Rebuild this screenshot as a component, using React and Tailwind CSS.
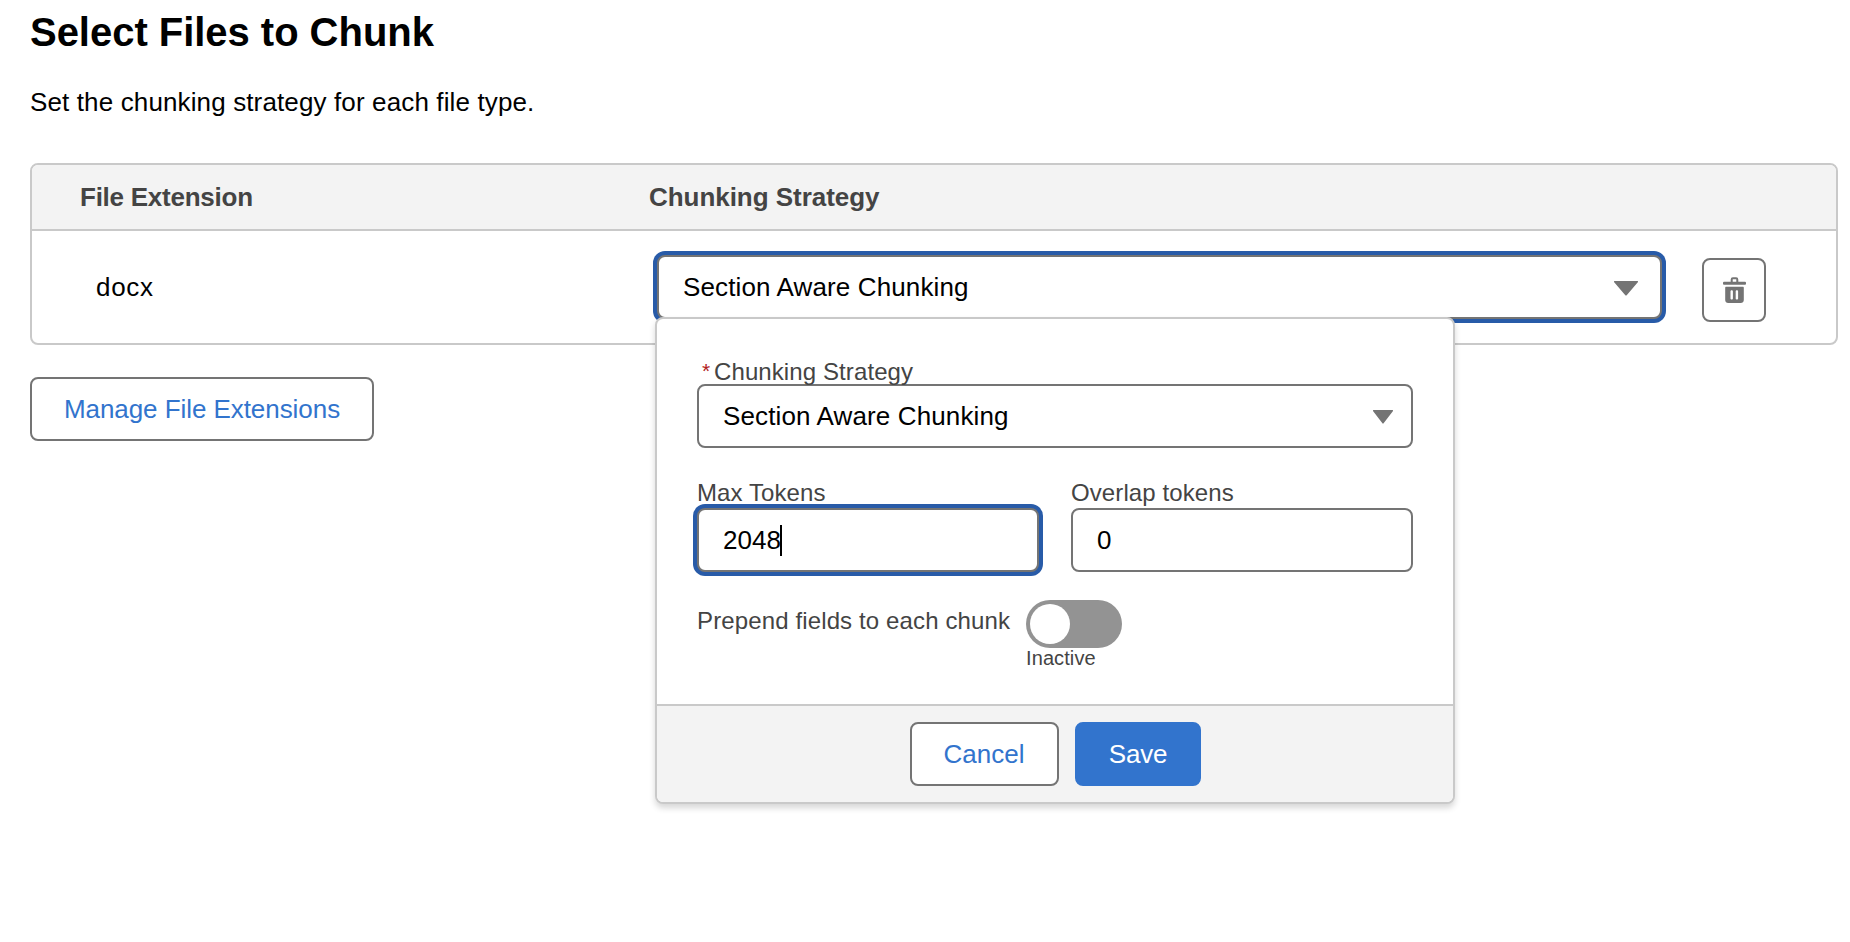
import clsx from 'clsx'

function DownTriangle({ className }) {
  return (
    <svg viewBox="0 0 24 16" preserveAspectRatio="none" className={clsx('shrink-0 fill-[#747474]', className)}>
      <path d="M.8 0h22.4c.8 0 1.100.7.6 1.300L12.700 15.200c-.4.5-1 .5-1.400 0L.2 1.300C-.3.7 0 0 .8 0z" />
    </svg>
  )
}

function TrashIcon() {
  return (
    <svg viewBox="0 0 23 26" className="w-[23px] h-[26px] fill-[#747474]">
      <path
        d="M8.700 5.500V2.400c0-.7.5-1.200 1.200-1.200h3.200c.7 0 1.200.5 1.200 1.200v3.100"
        className="fill-none stroke-[#747474] stroke-2"
      />
      <rect y="4.700" width="23" height="3" rx="1" />
      <path
        fillRule="evenodd"
        d="M3.200 9.700h16.600c.6 0 1 .4 1 1V23c0 1.700-1.300 3-3 3H5.200c-1.700 0-3-1.300-3-3V10.700c0-.6.4-1 1-1zM8.700 13.200c-.7 0-1.200.5-1.200 1.100v7.200c0 .6.5 1.100 1.200 1.100s1.200-.5 1.200-1.100v-7.200c0-.6-.5-1.100-1.200-1.100zm5.200 0c-.7 0-1.200.5-1.200 1.100v7.200c0 .6.5 1.100 1.200 1.100s1.200-.5 1.200-1.100v-7.200c0-.6-.5-1.100-1.200-1.100z"
      />
    </svg>
  )
}

function Field({ focused, className, children }) {
  return (
    <div
      className={clsx(
        'h-16 flex items-center rounded-lg border-2 border-[#747474] bg-white pl-6 text-[26px] leading-10 text-black',
        focused && 'ring-4 ring-[#285ba8]',
        className
      )}
    >
      {children}
    </div>
  )
}

function Button({ primary, className, children }) {
  return (
    <button
      className={clsx(
        'h-16 flex items-center justify-center rounded-lg border-2 text-[26px] leading-10',
        primary ? 'border-[#3274cd] bg-[#3274cd] text-white' : 'border-[#747474] bg-white text-[#3274cd]',
        className
      )}
    >
      {children}
    </button>
  )
}

function StrategyPopover() {
  return (
    <div className="absolute left-[-2px] top-[62px] z-10 w-[800px] rounded-lg border-2 border-[#c9c9c9] bg-white shadow-[0_4px_6px_rgba(0,0,0,0.16)]">
      <div className="px-10 pt-10 pb-9 text-2xl text-[#444444]">
        <div className="flex h-[25px] leading-[25px]">
          <span className="w-[17px] pl-[5px] text-[21px] leading-[23px] text-[#b1201c]">*</span>
          <span className="tracking-[0.1px]">Chunking Strategy</span>
        </div>
        <Field className="justify-between pr-[18px]">
          <span className="tracking-[0.13px]">Section Aware Chunking</span>
          <DownTriangle className="mt-0.5 w-5 h-3.5" />
        </Field>

        <div className="mt-[30px] grid grid-cols-2 gap-8">
          <div>
            <div className="leading-[30px] tracking-[0.1px]">Max Tokens</div>
            <Field focused>
              2048
              <span className="-ml-px w-0.5 h-[31px] bg-black" />
            </Field>
          </div>
          <div>
            <div className="leading-[30px] tracking-[0.1px]">Overlap tokens</div>
            <Field>0</Field>
          </div>
        </div>

        <div className="mt-7 flex gap-4">
          <div className="w-[313px] whitespace-nowrap pt-[5px] leading-8 tracking-[0.13px]">
            Prepend fields to each chunk
          </div>
          <div>
            <div className="flex h-12 w-24 items-center rounded-full bg-[#939393] p-1">
              <div className="size-10 rounded-full bg-white" />
            </div>
            <div className="text-[20px] leading-5 tracking-[0.1px]">Inactive</div>
          </div>
        </div>
      </div>

      <div className="flex justify-center gap-4 rounded-b-md border-t-2 border-[#c9c9c9] bg-[#f3f3f3] py-4">
        <Button className="w-[149px]">Cancel</Button>
        <Button primary className="w-[126px] pl-px tracking-[-0.2px]">Save</Button>
      </div>
    </div>
  )
}

export default function App() {
  return (
    <div className="h-[942px] w-[1850px] overflow-hidden bg-white pt-2 pl-[30px] pr-3 font-['Helvetica_Neue','Liberation_Sans',Arial,sans-serif] text-black">
      <h1 className="text-[40px] leading-[48px] font-bold tracking-[-0.03px]">Select Files to Chunk</h1>
      <p className="mt-[26px] text-[26px] leading-10 tracking-[0.13px]">
        Set the chunking strategy for each file type.
      </p>

      <div className="mt-[41px] rounded-lg border-2 border-[#c9c9c9]">
        <div className="flex h-[66px] items-center rounded-t-md border-b-2 border-[#c9c9c9] bg-[#f3f3f3] pl-12 text-[26px] leading-10 font-bold text-[#444444]">
          <div className="w-[569px] tracking-[-0.25px]">File Extension</div>
          <div className="tracking-[-0.04px]">Chunking Strategy</div>
        </div>
        <div className="flex h-28 items-center">
          <div className="w-[625px] pl-16 text-[26px] leading-10 tracking-[0.7px]">docx</div>
          <div className="relative w-[1005px]">
            <Field focused className="justify-between pr-[22px]">
              <span className="tracking-[0.13px]">Section Aware Chunking</span>
              <DownTriangle className="mt-[3px] w-6 h-[15px]" />
            </Field>
            <StrategyPopover />
          </div>
          <Button className="ml-10 mt-1.5 w-16">
            <TrashIcon />
          </Button>
        </div>
      </div>

      <Button className="mt-8 w-[344px] tracking-[-0.06px]">Manage File Extensions</Button>
    </div>
  )
}
